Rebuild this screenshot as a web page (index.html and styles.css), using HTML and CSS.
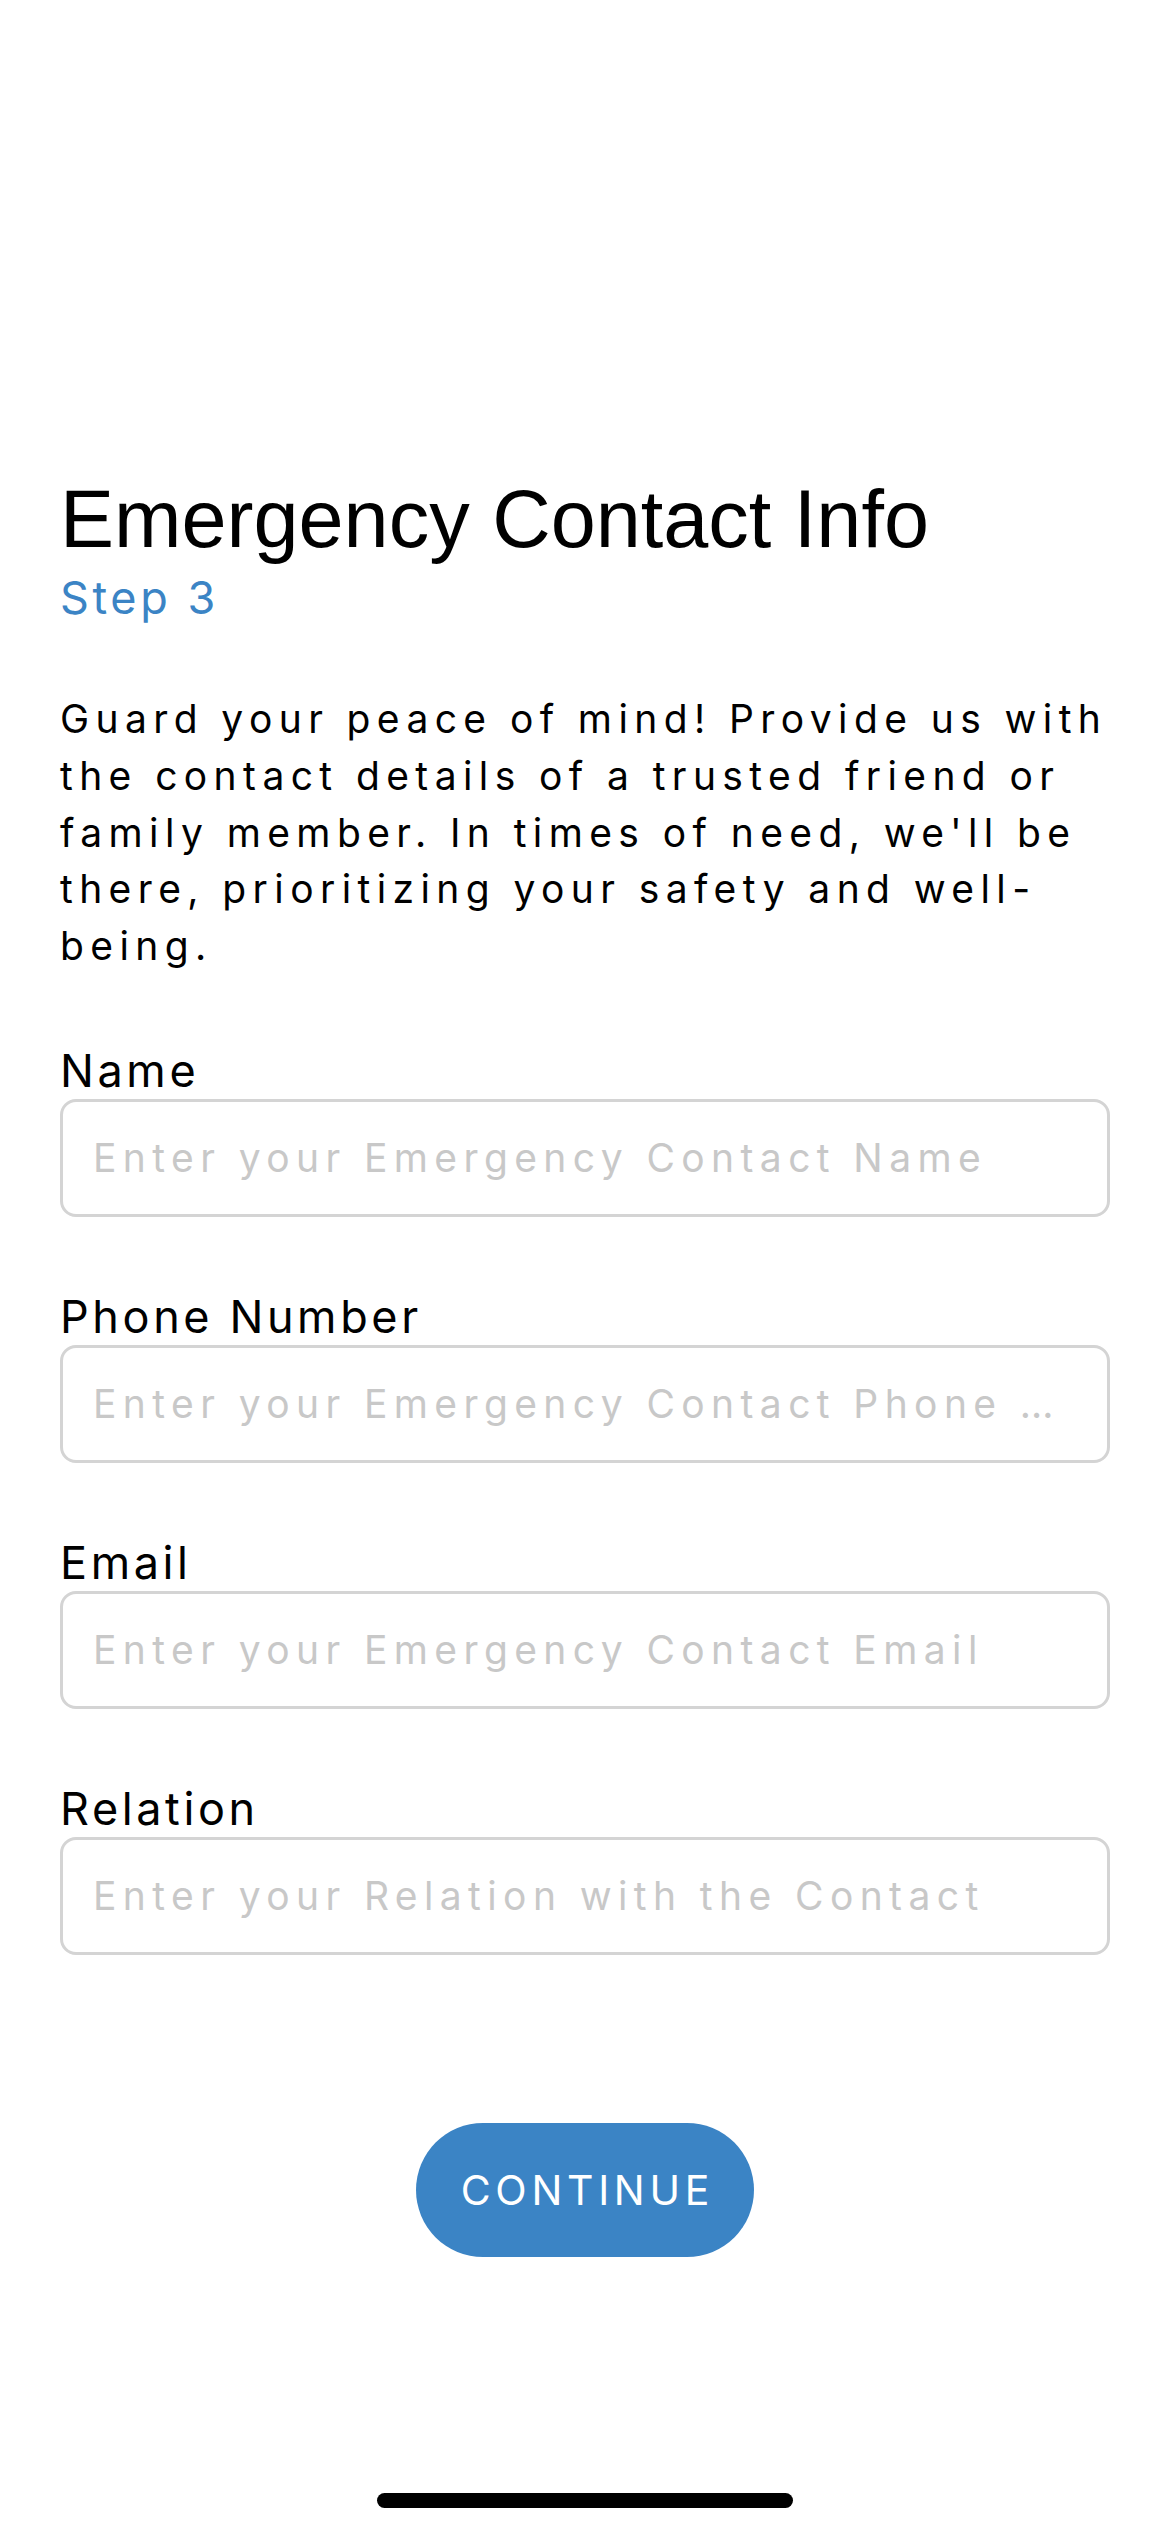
FILE: index.html
```html
<!DOCTYPE html>
<html lang="en">
<head>
<meta charset="utf-8">
<title>Emergency Contact Info</title>
<link rel="stylesheet" href="styles.css">
</head>
<body>
<main class="screen">
  <header class="head">
    <h1 class="title">Emergency Contact Info</h1>
    <p class="step">Step 3</p>
  </header>
  <p class="intro">Guard your peace of mind! Provide us with the contact details of a trusted friend or family member. In times of need, we'll be there, prioritizing your safety and well-being.</p>
  <form class="form">
    <label class="field">
      <span class="label">Name</span>
      <input class="input" type="text" placeholder="Enter your Emergency Contact Name">
    </label>
    <label class="field">
      <span class="label">Phone Number</span>
      <input class="input" type="tel" placeholder="Enter your Emergency Contact Phone Number">
    </label>
    <label class="field">
      <span class="label">Email</span>
      <input class="input" type="email" placeholder="Enter your Emergency Contact Email">
    </label>
    <label class="field">
      <span class="label">Relation</span>
      <input class="input" type="text" placeholder="Enter your Relation with the Contact">
    </label>
    <div class="actions">
      <button class="continue" type="button">CONTINUE</button>
    </div>
  </form>
  <div class="home-bar"></div>
</main>
</body>
</html>
```
FILE: styles.css
```css
* { box-sizing: border-box; }
html, body { margin: 0; padding: 0; background: #ffffff; }
body {
  font-family: Inter, "Liberation Sans", Arial, sans-serif;
  color: #000;
}
.screen {
  width: 1170px;
  height: 2532px;
  padding: 473px 60px 0 60px;
  display: flex;
  flex-direction: column;
  position: relative;
}
.head { display: flex; flex-direction: column; }
.title {
  margin: 0;
  font-family: "Liberation Sans", Arial, sans-serif;
  font-size: 81px;
  line-height: 92px;
  font-weight: 400;
  letter-spacing: 0;
}
.step {
  margin: 0;
  font-size: 45px;
  line-height: 66px;
  color: #3b84c5;
  letter-spacing: 3.6px;
}
.intro {
  margin: 60px 0 0 0;
  font-size: 39px;
  line-height: 56.8px;
  letter-spacing: 6.4px;
}
.form {
  margin-top: 68px;
  display: flex;
  flex-direction: column;
  gap: 72px;
}
.field { display: flex; flex-direction: column; }
.label {
  font-size: 45px;
  line-height: 56px;
  letter-spacing: 3.6px;
}
.input {
  width: 1050px;
  height: 118px;
  border: 3px solid #d4d4d4;
  border-radius: 16px;
  padding: 0 30px;
  font-family: Inter, "Liberation Sans", Arial, sans-serif;
  font-size: 39px;
  letter-spacing: 6.4px;
  color: #000;
  background: #fff;
  outline: none;
  text-overflow: ellipsis;
}
.input::placeholder {
  color: #c8c8c8;
  opacity: 1;
  text-overflow: ellipsis;
}
.actions {
  display: flex;
  justify-content: center;
  margin-top: 96px;
}
.continue {
  width: 338px;
  height: 134px;
  border: none;
  border-radius: 67px;
  background: #3b84c5;
  color: #fff;
  font-family: Inter, "Liberation Sans", Arial, sans-serif;
  font-size: 41px;
  letter-spacing: 4.7px;
  padding: 0 0 0 4.7px;
}
.home-bar {
  position: absolute;
  left: 377px;
  bottom: 24px;
  width: 416px;
  height: 15px;
  border-radius: 8px;
  background: #000;
}
```
